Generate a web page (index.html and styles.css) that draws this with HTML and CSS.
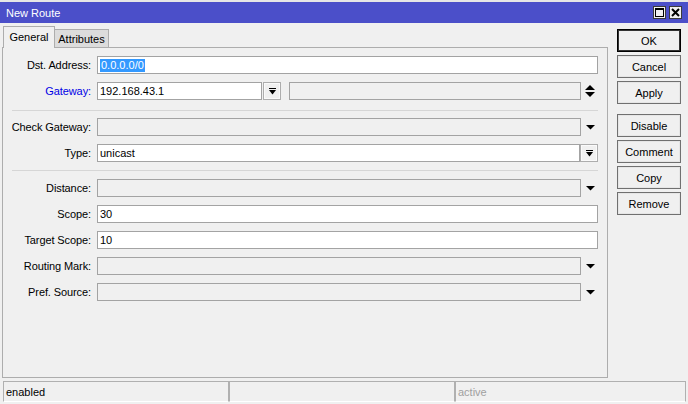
FILE: index.html
```html
<!DOCTYPE html>
<html>
<head>
<meta charset="utf-8">
<title>New Route</title>
<link rel="stylesheet" href="styles.css">
</head>
<body>
<div class="window">
  <div class="titlebar">
    <span class="title">New Route</span>
    <div class="wbtns">
      <span class="wbtn"><svg width="11" height="11" viewBox="0 0 11 11"><rect x="1.5" y="1.5" width="8" height="8" fill="none" stroke="#000" stroke-width="1"/><rect x="1" y="1" width="9" height="2" fill="#000"/></svg></span>
      <span class="wbtn"><svg width="11" height="11" viewBox="0 0 11 11"><path d="M2 2 L9 9 M9 2 L2 9" stroke="#000" stroke-width="2"/></svg></span>
    </div>
  </div>
  <div class="main">
    <div class="left">
      <div class="tabs">
        <div class="tab active">General</div>
        <div class="tab">Attributes</div>
      </div>
      <div class="panel">
        <div class="row">
          <span class="lbl">Dst. Address:</span>
          <div class="fields"><div class="field white grow"><span class="sel">0.0.0.0/0</span></div></div>
        </div>
        <div class="row">
          <span class="lbl blue">Gateway:</span>
          <div class="fields">
            <div class="field white gw">192.168.43.1</div>
            <div class="sbtn gwbtn"><svg width="7" height="7" viewBox="0 0 7 7"><rect x="0" y="0" width="7" height="1" fill="#000"/><polygon points="0,2 7,2 3.5,6.5" fill="#000"/></svg></div>
            <div class="field grey gw2"></div>
            <div class="ico"><svg width="10" height="12" viewBox="0 0 10 12"><polygon points="5,0 10,5 0,5" fill="#000"/><polygon points="0,7 10,7 5,12" fill="#000"/></svg></div>
          </div>
        </div>
        <div class="sep first"></div>
        <div class="row">
          <span class="lbl">Check Gateway:</span>
          <div class="fields">
            <div class="field grey grow"></div>
            <div class="ico"><svg width="9" height="5" viewBox="0 0 9 5"><polygon points="0,0 9,0 4.5,4.5" fill="#000"/></svg></div>
          </div>
        </div>
        <div class="row">
          <span class="lbl">Type:</span>
          <div class="fields">
            <div class="field white grow">unicast</div>
            <div class="sbtn"><svg width="7" height="7" viewBox="0 0 7 7"><rect x="0" y="0" width="7" height="1" fill="#000"/><polygon points="0,2 7,2 3.5,6.5" fill="#000"/></svg></div>
          </div>
        </div>
        <div class="sep second"></div>
        <div class="row">
          <span class="lbl">Distance:</span>
          <div class="fields">
            <div class="field grey grow"></div>
            <div class="ico"><svg width="9" height="5" viewBox="0 0 9 5"><polygon points="0,0 9,0 4.5,4.5" fill="#000"/></svg></div>
          </div>
        </div>
        <div class="row">
          <span class="lbl">Scope:</span>
          <div class="fields"><div class="field white grow">30</div></div>
        </div>
        <div class="row">
          <span class="lbl">Target Scope:</span>
          <div class="fields"><div class="field white grow">10</div></div>
        </div>
        <div class="row">
          <span class="lbl">Routing Mark:</span>
          <div class="fields">
            <div class="field grey grow"></div>
            <div class="ico"><svg width="9" height="5" viewBox="0 0 9 5"><polygon points="0,0 9,0 4.5,4.5" fill="#000"/></svg></div>
          </div>
        </div>
        <div class="row">
          <span class="lbl">Pref. Source:</span>
          <div class="fields">
            <div class="field grey grow"></div>
            <div class="ico"><svg width="9" height="5" viewBox="0 0 9 5"><polygon points="0,0 9,0 4.5,4.5" fill="#000"/></svg></div>
          </div>
        </div>
      </div>
    </div>
    <div class="buttons">
      <div class="btn default">OK</div>
      <div class="btn">Cancel</div>
      <div class="btn">Apply</div>
      <div class="btn spaced">Disable</div>
      <div class="btn">Comment</div>
      <div class="btn">Copy</div>
      <div class="btn">Remove</div>
    </div>
  </div>
  <div class="status">
    <div class="seg fixed">enabled</div>
    <div class="seg fixed"></div>
    <div class="seg dim">active</div>
  </div>
</div>
</body>
</html>
```

FILE: styles.css
```css
html, body {
  margin: 0;
  padding: 0;
}
body {
  width: 688px;
  height: 404px;
  overflow: hidden;
  background: #f0f0f0;
  font-family: "Liberation Sans", Arial, sans-serif;
  font-size: 11px;
  color: #000;
}
.window {
  height: 404px;
  box-sizing: border-box;
  border-top: 2px solid #e6e6e6;
  display: flex;
  flex-direction: column;
}
.titlebar {
  height: 21px;
  flex: none;
  background: #4b4fc9;
  display: flex;
  align-items: center;
  padding-left: 6px;
}
.title {
  color: #fff;
  font-size: 11px;
}
.wbtns {
  margin-left: auto;
  display: flex;
  gap: 3px;
  padding-right: 6px;
}
.wbtn {
  width: 13px;
  height: 13px;
  box-sizing: border-box;
  border: 1px solid #3a3a3a;
  background: #f0f0f0;
  display: flex;
  align-items: center;
  justify-content: center;
}
.wbtn svg { display: block; }
.main {
  height: 358px;
  flex: none;
  box-sizing: border-box;
  padding: 3px 0 3px 2px;
  display: flex;
}
.left {
  width: 606px;
  display: flex;
  flex-direction: column;
}
.tabs {
  height: 22px;
  margin-bottom: -1px;
  display: flex;
  align-items: flex-end;
  padding-left: 1px;
  position: relative;
  z-index: 1;
}
.tab {
  box-sizing: border-box;
  height: 19px;
  width: 54px;
  border: 1px solid #adadad;
  border-left: none;
  background: #dcdcdc;
  display: flex;
  align-items: center;
  justify-content: center;
  padding-top: 1px;
}
.tab.active {
  height: 22px;
  width: 52px;
  border-left: 1px solid #adadad;
  border-bottom: none;
  background: #f0f0f0;
  padding-top: 0;
  padding-bottom: 2px;
}
.panel {
  flex: 1;
  box-sizing: border-box;
  border: 1px solid #adadad;
  padding-top: 8px;
  display: flex;
  flex-direction: column;
}
.row {
  height: 18px;
  display: flex;
  align-items: center;
  flex: none;
}
.row + .row {
  margin-top: 8px;
}
.lbl {
  width: 88px;
  text-align: right;
  margin-right: 6px;
  white-space: nowrap;
  letter-spacing: -0.1px;
}
.lbl.blue {
  color: #0000e6;
}
.fields {
  width: 501px;
  height: 18px;
  display: flex;
}
.field {
  box-sizing: border-box;
  height: 18px;
  border: 1px solid #a3a3a3;
  padding-left: 2px;
  display: flex;
  align-items: center;
  white-space: nowrap;
}
.field.white { background: #fff; }
.field.grey { background: #f0f0f0; }
.field.grow { flex: 1; }
.field.gw { width: 165px; }
.field.gw2 { width: 292px; margin-left: 8px; }
.sel {
  background: #3399ff;
  color: #fff;
  line-height: 13px;
  padding: 0 1px;
}
.sbtn {
  box-sizing: border-box;
  width: 18px;
  height: 18px;
  border: 1px solid #adadad;
  background: #f0f0f0;
  box-shadow: inset 0 0 0 1px #fafafa;
  display: flex;
  align-items: center;
  justify-content: center;
}
.sbtn.gwbtn { margin-left: 1px; }
.sbtn svg, .ico svg { display: block; }
.ico {
  width: 17px;
  height: 18px;
  display: flex;
  align-items: center;
  justify-content: center;
  padding-left: 1px;
  box-sizing: border-box;
}
.sep {
  height: 1px;
  background: #d6d6d6;
  margin-left: 9px;
  width: 586px;
  flex: none;
}
.sep.first { margin-top: 10px; margin-bottom: 7px; }
.sep.second { margin-top: 8px; margin-bottom: 8px; }
.buttons {
  margin-left: 9px;
  padding-top: 3px;
  width: 64px;
  display: flex;
  flex-direction: column;
  gap: 3px;
}
.btn {
  box-sizing: border-box;
  height: 23px;
  border: 1px solid #707070;
  box-shadow: inset 0 0 0 1px #e6e6e6;
  background: #f0f0f0;
  display: flex;
  align-items: center;
  justify-content: center;
}
.btn.default {
  border: 1px solid #000;
  box-shadow: inset 0 0 0 1px #333;
}
.btn.spaced {
  margin-top: 7px;
}
.status {
  height: 21px;
  flex: none;
  display: flex;
  padding: 0 2px 0 3px;
}
.seg {
  flex: 1;
  box-sizing: border-box;
  border: 1px solid #b0b0b0;
  border-bottom-color: #fff;
  display: flex;
  align-items: center;
  padding-left: 2px;
}
.seg.fixed {
  flex: none;
  width: 226px;
}
.seg.dim {
  color: #a0a0a0;
}
```
